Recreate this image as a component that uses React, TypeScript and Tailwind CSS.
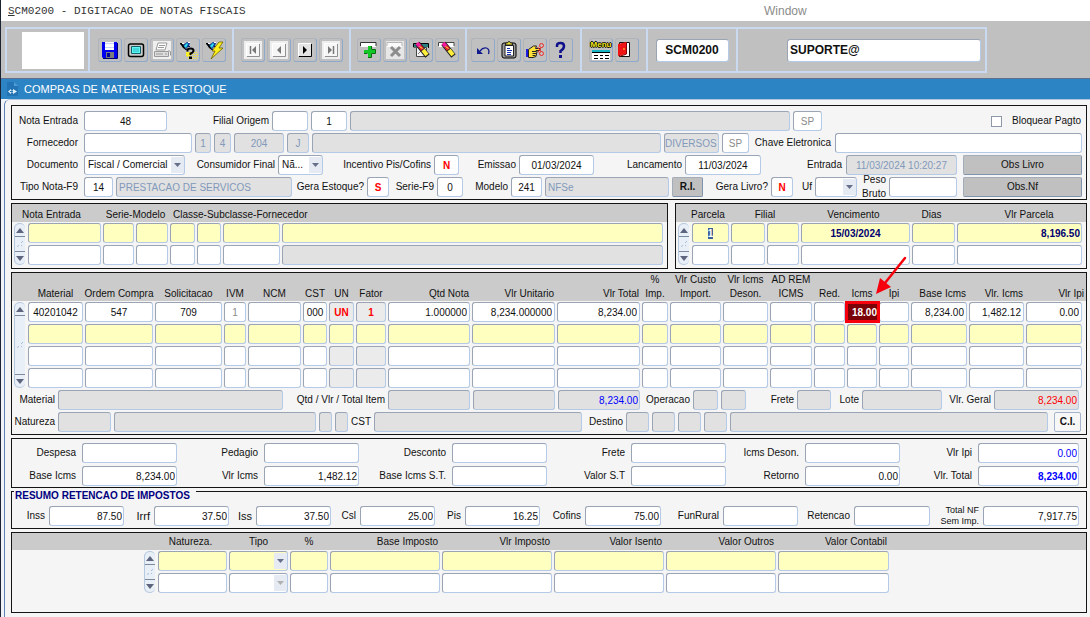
import React, { useEffect, useRef } from 'react'
import clsx from 'clsx'

type Tone = 'white' | 'gray' | 'light' | 'yellow'

const tones: Record<Tone, string> = {
  white: 'bg-white',
  gray: 'bg-[#e1e1e1]',
  light: 'bg-[#ebebeb]',
  yellow: 'bg-[#ffffc0]',
}

const frame =
  'h-5 min-w-0 rounded-[3px] border border-t-[#9aa4b4] border-l-[#9aa4b4] border-r-[#b4cae6] border-b-[#b4cae6] outline-none'

type FieldProps = {
  id?: string
  label?: string
  value?: string
  tone?: Tone
  className?: string
}

function Field({ id, label, value = '', tone = 'white', className }: FieldProps) {
  return (
    <input
      id={id}
      aria-label={label}
      type="text"
      defaultValue={value}
      readOnly={tone === 'gray'}
      className={clsx(frame, tones[tone], 'px-0.5', className)}
    />
  )
}

function Label({ htmlFor, className, children }: { htmlFor: string; className?: string; children: React.ReactNode }) {
  return (
    <label htmlFor={htmlFor} className={clsx('shrink-0 text-right whitespace-nowrap', className)}>
      {children}
    </label>
  )
}

type SelectProps = { id?: string; label?: string; value?: string; tone?: Tone; muted?: boolean; className?: string }

function Select({ id, label, value = '', tone = 'white', muted, className }: SelectProps) {
  return (
    <span className={clsx('relative block shrink-0', className)}>
      <select
        id={id}
        aria-label={label}
        defaultValue={value}
        className={clsx(frame, tones[tone], 'block w-full appearance-none border-r-[#9aa4b4] border-b-[#9aa4b4] pr-3 pl-[3px]')}
      >
        <option>{value}</option>
      </select>
      <span className="pointer-events-none absolute inset-y-0.5 right-px flex w-[13px] items-center justify-center bg-[#e6ebf3]">
        <svg width="7" height="4" viewBox="0 0 7 4">
          <path d="M0 0h7L3.5 4z" fill={muted ? '#b0b0b0' : '#66708a'} />
        </svg>
      </span>
    </span>
  )
}

function Scroller({ className }: { className: string }) {
  return (
    <div className={clsx('mx-auto flex w-[11px] flex-col rounded-full border-l border-[#b5c8e0] bg-[#e9eff7]', className)}>
      <button type="button" aria-label="Anterior" className="flex h-[14px] items-center justify-center rounded-t-full border-t border-[#b5c8e0] border-b border-b-[#7d899c]">
        <svg width="8" height="5" viewBox="0 0 8 5"><path d="M4 0l4 5H0z" fill="#5c657d" /></svg>
      </button>
      <span className="flex flex-1 items-center justify-center">
        <svg width="8" height="8" viewBox="0 0 8 8" stroke="#a9bdd8"><path d="M1 6.500l2-1M5 3l2-2M5 6l1-1" /></svg>
      </span>
      <button type="button" aria-label="Proximo" className="flex h-[14px] items-center justify-center rounded-b-full border-b border-[#b5c8e0] border-t border-t-[#7d899c]">
        <svg width="8" height="5" viewBox="0 0 8 5"><path d="M0 0h8L4 5z" fill="#5c657d" /></svg>
      </button>
    </div>
  )
}

/* ---------- toolbar drawings, all on a 24x24 box ---------- */

const Torch = () => (
  <>
    <path d="M4 5h2l2 2 1 3 2 1-1 1-3-2-2-3-1-1z" fill="#000" />
    <path d="M7 7l4-3 3 1-1 3-3 3z" fill="#123f9e" />
    <path d="M8 8l3-3 1 1-2 4z" fill="#2be0ea" />
    <path d="M12 4h2v1h-2zM6 5h2v1H6z" fill="#fff" />
    <path d="M12 8h2v1h-2zM9 11h2v1H9z" fill="#0a1c50" />
  </>
)

const Pencil = () => (
  <>
    <path d="M8.500 5.500l10 12.500" stroke="#222" strokeWidth="5.500" />
    <path d="M8 5l3 3.500" stroke="#f21c9a" strokeWidth="4" />
    <path d="M11 8.500l2.500 3" stroke="#e3202a" strokeWidth="4" />
    <path d="M10.500 8.500l3 2" stroke="#ffef3a" />
    <path d="M14 12l4 5" stroke="#ffef3a" strokeWidth="4" />
  </>
)

const Tile = ({ on }: { on?: boolean }) => (
  <>
    <path d="M3 3h18v18H3z" fill={on ? '#c4c4c4' : '#eeeeee'} />
    <path d="M6 6h12v12H6z" fill={on ? '#e4e4e4' : '#f6f6f6'} />
    <path d="M6 18.500h12.500V6" fill="none" stroke={on ? '#000' : '#909090'} />
    <path d="M5.500 18V5.500H18" fill="none" stroke="#fff" />
  </>
)

const icons: Record<string, React.ReactNode> = {
  Salvar: (
    <>
      <path d="M4 4h15v16H5l-1-1z" fill="#0000f0" />
      <path d="M7 4h9v8H7z" fill="#fff" />
      <path d="M7 5.500h9M7 9.500h9" stroke="#c9d2ff" />
      <path d="M8 14h8v6H8z" fill="#7c7c7c" />
      <path d="M9 15h3v4H9z" fill="#0000a0" />
      <path d="M19.500 5v15.500H5" fill="none" stroke="#000070" />
    </>
  ),
  Tela: (
    <>
      <rect x="4.500" y="6" width="15" height="12.500" rx="2" fill="#c9c9c9" stroke="#000" strokeWidth="1.500" />
      <path d="M7.500 8.500h9v7h-9z" fill="#5ff5f5" stroke="#14606a" />
      <path d="M9 11h6M9 13h6" stroke="#29b8bd" />
    </>
  ),
  Imprimir: (
    <>
      <path d="M3 3h18v18H3z" fill="#efefef" />
      <path d="M8 5h9l-2 7H6z" fill="#fff" stroke="#999" />
      <path d="M9 7.500h6M8 9.500h6" stroke="#999" />
      <path d="M4.500 13.500h14v5h-14z" fill="#ddd" stroke="#999" />
      <path d="M6 16h7M15 16h2M18.500 12.500l2 1v4" fill="none" stroke="#999" />
    </>
  ),
  Consultar: (
    <>
      <path d="M12 14.500h9M11 16.500h11M11 18.500h11M12 20.500h10" stroke="#f7ee28" strokeDasharray="1 1" />
      <path d="M10 14h4v4h-4z" fill="#f7ee28" />
      <Torch />
      <path d="M11.500 13.500V12q0-1.500 3-1.500t3 2-3 3V17" fill="none" stroke="#000" strokeWidth="2" />
      <path d="M13 18.500h3V21h-3z" fill="#000" />
    </>
  ),
  Executar: (
    <>
      <Torch />
      <path d="M17 4h4l-4 6h4L9 21l4-8h-3z" fill="#ffef1a" stroke="#6b6300" strokeWidth=".8" />
    </>
  ),
  Primeiro: (<><Tile /><path d="M9.500 8v8" stroke="#777" strokeWidth="1.500" /><path d="M15 8v8l-4-4z" fill="#777" /></>),
  Voltar: (<><Tile /><path d="M14 8v8l-4-4z" fill="#777" /></>),
  Avancar: (<><Tile on /><path d="M10 8v8l4-4z" fill="#000" /></>),
  Ultimo: (<><Tile /><path d="M9 8v8l4-4z" fill="#777" /><path d="M14.500 8v8" stroke="#777" strokeWidth="1.500" /></>),
  Inserir: (
    <>
      <path d="M4 5h15v4H4z" fill="#fff" />
      <path d="M3.500 8V4.500H19V8" fill="none" stroke="#333" />
      <path d="M11 8h3v4h4v3h-4v4h-3v-4H7v-3h4z" fill="#12c824" />
      <path d="M14.500 8v3.500H18.500v4h-4v4H11M7 15.500h3.500" fill="none" stroke="#076b10" />
    </>
  ),
  Remover: (
    <>
      <path d="M3 3h18v18H3z" fill="#e6e6e6" />
      <path d="M4 5h15v4H4z" fill="#fafafa" />
      <path d="M4 8V4.500h15V8" fill="none" stroke="#b5b5b5" />
      <path d="M8 9l9 9M17 9l-9 9" stroke="#8c8c8c" strokeWidth="3" />
    </>
  ),
  Pesquisar: (
    <>
      <path d="M4.500 9V5.500h15V10M4.500 9h3" fill="none" stroke="#000" />
      <path d="M5 6h14v3H5z" fill="#2c8080" />
      <path d="M7.500 9.500h10v9h-10z" fill="#f4f4f4" stroke="#444" />
      <path d="M9 16l4-4" stroke="#777" />
      <Pencil />
    </>
  ),
  Limpar: (
    <>
      <path d="M4 5h15v4H4z" fill="#fff" />
      <path d="M3.500 8V4.500H19V8" fill="none" stroke="#444" />
      <Pencil />
    </>
  ),
  Desfazer: (
    <>
      <path d="M9 13q3-4 6.500-3 3.500 1.500 2 6" fill="none" stroke="#101a8c" strokeWidth="1.300" />
      <path d="M6 10v6h6z" fill="#101a8c" />
    </>
  ),
  Colar: (
    <>
      <rect x="5" y="5" width="14" height="15" rx="2" fill="#9a9a9a" stroke="#000" />
      <path d="M8 7.500h8.500v10.500H8z" fill="#fff" stroke="#222" />
      <path d="M8.500 7h7V5h-2l-1-1.500h-1L10.500 5h-2z" fill="#f3e62a" stroke="#222" />
      <path d="M10 10.500h3M10 12.500h5M10 14.500h4M10 16.500h4" stroke="#1830a8" />
    </>
  ),
  Recortar: (
    <>
      <path d="M3 11h2v8H3z" fill="#1c1ce0" />
      <path d="M5.500 11.500l5-3.500h3l-1 2.500h4.500v2h-4l1 1-1 5-3 1h-4.500z" fill="#ffe23a" stroke="#222" />
      <path d="M9 13.500h4.500M9.500 15.500h4M9.500 17.500h3" stroke="#222" />
      <circle cx="18.500" cy="7.500" r="2" fill="none" stroke="#f02828" />
      <circle cx="18.500" cy="15.500" r="2" fill="none" stroke="#f02828" />
      <path d="M14.500 9l3.500 4.500M15 14.500l3-5" stroke="#f02828" />
    </>
  ),
  Ajuda: (
    <>
      <path d="M8 9V7.500Q8 5 11.500 5T15 8t-3.500 5v2" fill="none" stroke="#10108c" strokeWidth="2.500" />
      <path d="M10 17h3v3h-3z" fill="#10108c" />
    </>
  ),
  Sair: (
    <>
      <path d="M5 4h10v14H5z" fill="#e8e8e8" />
      <path d="M4.500 4.500h10v14h-10z" fill="none" stroke="#111" />
      <path d="M10 5h4v13h-4z" fill="#fff" />
      <path d="M3 6l8-2v12l-8 2z" fill="#f01414" />
      <path d="M11.500 4v12L4 18.500" fill="none" stroke="#8b0000" />
      <path d="M8 11h2" stroke="#ffe23a" />
    </>
  ),
}

function Tool({ name }: { name: string }) {
  return (
    <button
      type="button"
      title={name}
      aria-label={name}
      className="flex size-6 items-center justify-center rounded-[3px] border border-t-[#b0b4ba] border-l-[#b0b4ba] border-r-[#8ea9cb] border-b-[#8ea9cb]"
    >
      {name === 'Menu' ? (
        <span className="flex w-full flex-col items-center">
          <span className="text-[8px] leading-[10px] font-bold text-[#f5ea1e] [text-shadow:1px_0_#000,-1px_0_#000,0_1px_#000,0_-1px_#000]">Menu</span>
          <svg width="20" height="10" viewBox="0 0 20 10">
            <path d="M1 0h18v10H1z" fill="#fff" />
            <path d="M1 1h18" stroke="#1ab5c4" strokeWidth="2" />
            <path d="M1 2.500h18" stroke="#000" />
            <path d="M3 5.500h4M9 5.500h3M14 5.500h4M3 8.500h4M9 8.500h3M14 8.500h4" stroke="#000" />
          </svg>
        </span>
      ) : (
        <svg width="24" height="24" viewBox="0 0 24 24" className="shrink-0">{icons[name]}</svg>
      )}
    </button>
  )
}

function ToolGroup({ names, className }: { names: string[]; className: string }) {
  return (
    <div className={clsx('flex shrink-0 items-center gap-0.5 border-r-2 border-[#c9d9ef]', className)}>
      {names.map(n => <Tool key={n} name={n} />)}
    </div>
  )
}

function Toolbar() {
  return (
    <div className="h-[58px] border-b border-[#5f6f8c] bg-[#c0c0c0] px-1 pt-1.5">
      <div className="flex h-[46px] w-fit border-2 border-[#c9d9ef] text-xs font-bold">
        <div className="flex w-[83px] shrink-0 items-center justify-end border-r-2 border-[#c9d9ef] pr-1">
          <span className="h-[37px] w-[62px] bg-white" />
        </div>
        <ToolGroup className="w-[144px] pl-2" names={['Salvar', 'Tela', 'Imprimir', 'Consultar', 'Executar']} />
        <ToolGroup className="w-[117px] pl-[7px]" names={['Primeiro', 'Voltar', 'Avancar', 'Ultimo']} />
        <ToolGroup className="w-[116px] pl-[6px]" names={['Inserir', 'Remover', 'Pesquisar', 'Limpar']} />
        <ToolGroup className="w-[115px] pl-[4px]" names={['Desfazer', 'Colar', 'Recortar', 'Ajuda']} />
        <ToolGroup className="w-[66px] pl-[7px]" names={['Menu', 'Sair']} />
        <div className="flex w-[90px] shrink-0 items-center justify-center border-r-2 border-[#c9d9ef]">
          <input aria-label="Programa" defaultValue="SCM0200" className={clsx(frame, 'h-[23px] w-[73px] bg-white text-center')} />
        </div>
        <div className="flex w-[247px] shrink-0 items-center justify-end pr-1">
          <input aria-label="Usuario" defaultValue="SUPORTE@" className={clsx(frame, 'h-[23px] w-[194px] bg-white px-0.5')} />
        </div>
      </div>
    </div>
  )
}

const panel = 'border border-[#151515] bg-[#f5f5f5]'
const push = 'h-5 shrink-0 rounded-[2px] border border-[#a3adba] border-b-[#7f93ad] border-r-[#7f93ad] bg-[#c0c0c0] text-center'

function NotaPanel() {
  return (
    <section className={clsx(panel, 'flex flex-col gap-0.5 pt-[5px] pr-1 pb-0.5 pl-0.5')}>
      <div className="flex items-center gap-[3px]">
        <Label htmlFor="nota" className="w-[67px] pr-[3px]">Nota Entrada</Label>
        <Field id="nota" value="48" className="w-[83px] text-center" />
        <Label htmlFor="filial" className="w-[99px]">Filial Origem</Label>
        <Field id="filial" className="w-[36px]" />
        <Field label="Codigo filial" value="1" className="w-[36px] text-center" />
        <Field label="Nome filial" tone="gray" className="flex-1" />
        <Field label="UF filial" value="SP" className="w-[29px] text-center text-[#8a8a8a]" />
        <div className="flex w-[257px] items-center justify-end gap-[10px] pr-px">
          <input id="bloq" type="checkbox" className="size-[11px] appearance-none border border-[#8e98a8] bg-white" />
          <label htmlFor="bloq">Bloquear Pagto</label>
        </div>
      </div>
      <div className="flex items-center gap-[3px]">
        <Label htmlFor="forn" className="w-[67px] pr-[3px]">Fornecedor</Label>
        <Field id="forn" className="w-[108px]" />
        <Field label="Classe" tone="gray" value="1" className="w-[16px] text-center text-[#8199bb]" />
        <Field label="Subclasse" tone="gray" value="4" className="w-[17px] text-center text-[#8199bb]" />
        <Field label="Codigo" tone="gray" value="204" className="w-[50px] text-center text-[#8199bb]" />
        <Field label="Pessoa" tone="gray" value="J" className="w-[22px] text-center text-[#8199bb]" />
        <Field label="Nome fornecedor" tone="gray" className="flex-1" />
        <Field label="Cidade" tone="gray" value="DIVERSOS" className="w-[55px] !px-0 text-[#8199bb]" />
        <Field label="UF" value="SP" className="w-[27px] text-center text-[#8a8a8a]" />
        <Label htmlFor="chave" className="w-[80px] pr-px">Chave Eletronica</Label>
        <Field id="chave" className="w-[247px]" />
      </div>
      <div className="flex items-center gap-[3px]">
        <Label htmlFor="doc" className="w-[67px] pr-[3px]">Documento</Label>
        <Select id="doc" value="Fiscal / Comercial" className="w-[101px]" />
        <Label htmlFor="cons" className="w-[87px]">Consumidor Final</Label>
        <Select id="cons" value="Nã..." className="w-[45px]" />
        <Label htmlFor="inc" className="w-[105px]">Incentivo Pis/Cofins</Label>
        <Field id="inc" value="N" className="w-[25px] text-center font-bold text-[#f00]" />
        <Label htmlFor="emi" className="w-[54px]">Emissao</Label>
        <Field id="emi" value="01/03/2024" className="w-[75px] text-center" />
        <Label htmlFor="lan" className="w-[85px]">Lancamento</Label>
        <Field id="lan" value="11/03/2024" className="w-[76px] text-center" />
        <Label htmlFor="ent" className="flex-1 pr-px">Entrada</Label>
        <Field id="ent" tone="gray" value="11/03/2024 10:20:27" className="w-[111px] text-center text-[#8199bb]" />
        <button type="button" className={clsx(push, 'ml-[3px] w-[119px]')}>Obs Livro</button>
      </div>
      <div className="flex items-center gap-[3px]">
        <Label htmlFor="tipo" className="w-[67px] pr-[3px]">Tipo Nota-F9</Label>
        <Field id="tipo" value="14" className="w-[29px] text-center" />
        <Field label="Descricao tipo" tone="gray" value="PRESTACAO DE SERVICOS" className="w-[176px] text-[#8199bb]" />
        <Label htmlFor="gest" className="w-[69px]">Gera Estoque?</Label>
        <Field id="gest" value="S" className="w-[22px] text-center font-bold text-[#f00]" />
        <Label htmlFor="serie" className="w-[42px]">Serie-F9</Label>
        <Field id="serie" value="0" className="w-[26px] text-center" />
        <Label htmlFor="mod" className="w-[42px]">Modelo</Label>
        <Field id="mod" value="241" className="w-[31px] text-center" />
        <Field label="Descricao modelo" tone="gray" value="NFSe" className="flex-1 text-[#8199bb]" />
        <button type="button" className={clsx(push, 'w-[31px] font-bold')}>R.I.</button>
        <Label htmlFor="gliv" className="w-[62px]">Gera Livro?</Label>
        <Field id="gliv" value="N" className="w-[22px] text-center font-bold text-[#f00]" />
        <Label htmlFor="uf" className="w-[16px]">Uf</Label>
        <Select id="uf" className="w-[42px]" />
        <Label htmlFor="peso" className="-my-1 w-[26px] leading-[14px]">Peso<br />Bruto</Label>
        <Field id="peso" className="w-[68px]" />
        <button type="button" className={clsx(push, 'ml-[3px] w-[119px]')}>Obs.Nf</button>
      </div>
    </section>
  )
}

const grid = 'w-full table-fixed border-collapse [&_td]:px-px [&_td]:py-px [&_td:last-child]:pr-1 [&_th]:p-0 [&_th]:font-normal [&_th]:whitespace-nowrap'
const headRow = 'h-[18px] [&_th]:!pt-[3px]'

function ReferenciaPanel() {
  return (
    <section className={clsx(panel, 'min-w-0 flex-1 pb-0.5')}>
      <table className={grid}>
        <colgroup>
          <col className="w-[15px]" /><col className="w-[75px]" /><col className="w-[33px]" /><col className="w-[34px]" />
          <col className="w-[27px]" /><col className="w-[26px]" /><col className="w-[59px]" /><col />
        </colgroup>
        <thead className="bg-[#cbcbcb]">
          <tr className={headRow}>
            <th colSpan={2} className="!pl-[10px] text-left">Nota Entrada</th>
            <th colSpan={2} className="text-center">Serie-Modelo</th>
            <th colSpan={4} className="!pl-1 text-left">Classe-Subclasse-Fornecedor</th>
          </tr>
        </thead>
        <tbody>
          {[0, 1].map(r => (
            <tr key={r}>
              {r === 0 && <td rowSpan={2}><Scroller className="h-[42px]" /></td>}
              {['Nota', 'Serie', 'Modelo', 'Classe', 'Subclasse', 'Codigo', 'Fornecedor'].map((n, i) => (
                <td key={n}>
                  <Field label={`${n} ${r + 1}`} tone={r === 0 ? 'yellow' : i === 6 ? 'gray' : 'white'} className="block w-full" />
                </td>
              ))}
            </tr>
          ))}
        </tbody>
      </table>
    </section>
  )
}

function ParcelaPanel() {
  const first = useRef<HTMLInputElement | null>(null)

  // parcela 1 opens focused with its text selected
  useEffect(() => {
    first.current?.focus({ preventScroll: true })
    first.current?.select()
  }, [])

  return (
    <section className={clsx(panel, 'w-[412px] shrink-0 pb-0.5')}>
      <table className={grid}>
        <colgroup>
          <col className="w-[15px]" /><col className="w-[39px]" /><col className="w-[36px]" /><col className="w-[34px]" />
          <col className="w-[111px]" /><col className="w-[45px]" /><col />
        </colgroup>
        <thead className="bg-[#cbcbcb]">
          <tr className={headRow}>
            <th /><th className="!pr-1.5 text-center">Parcela</th><th colSpan={2} className="text-center">Filial</th>
            <th className="!pr-1 text-center">Vencimento</th><th className="!pr-1 text-center">Dias</th><th className="!pl-4 text-center">Vlr Parcela</th>
          </tr>
        </thead>
        <tbody>
          <tr>
            <td rowSpan={2}><Scroller className="h-[42px]" /></td>
            <td>
              <input
                ref={first}
                aria-label="Parcela 1"
                defaultValue="1"
                className={clsx(frame, 'block w-full bg-[#ffffc0] text-center font-bold selection:bg-[#3c5f99] selection:text-white')}
              />
            </td>
            <td><Field label="Filial 1" tone="yellow" className="block w-full" /></td>
            <td><Field label="Filial 1 codigo" tone="yellow" className="block w-full" /></td>
            <td><Field label="Vencimento 1" tone="yellow" value="15/03/2024" className="block w-full text-center font-bold text-[#000070]" /></td>
            <td><Field label="Dias 1" tone="yellow" className="block w-full" /></td>
            <td><Field label="Vlr Parcela 1" tone="yellow" value="8,196.50" className="block w-full !pr-px text-right font-bold text-[#000070]" /></td>
          </tr>
          <tr>
            {['Parcela', 'Filial', 'Filial codigo', 'Vencimento', 'Dias', 'Vlr Parcela'].map(n => (
              <td key={n}><Field label={`${n} 2`} className="block w-full" /></td>
            ))}
          </tr>
        </tbody>
      </table>
    </section>
  )
}

type Column = { name: string; width: string; head?: string; cell?: string; value?: string; tone?: Tone }

const itemColumns: Column[] = [
  { name: 'Material', width: 'w-[57px]', value: '40201042', cell: 'text-center' },
  { name: 'Ordem Compra', width: 'w-[70px]', value: '547', cell: 'text-center' },
  { name: 'Solicitacao', width: 'w-[69px]', value: '709', cell: 'text-center' },
  { name: 'IVM', width: 'w-[24px]', value: '1', cell: 'text-center text-[#8a8a8a]' },
  { name: 'NCM', width: 'w-[55px]' },
  { name: 'CST', width: 'w-[26px]', value: '000', cell: 'text-center' },
  { name: 'UN', width: 'w-[27px]', value: 'UN', cell: 'text-center font-bold text-[#f00]', tone: 'light' },
  { name: 'Fator', width: 'w-[32px]', value: '1', cell: 'text-center font-bold text-[#f00]', tone: 'light' },
  { name: 'Qtd Nota', width: 'w-[84px]', head: 'text-right', value: '1.000000', cell: 'text-right' },
  { name: 'Vlr Unitario', width: 'w-[85px]', head: 'text-right', value: '8,234.000000', cell: 'text-right' },
  { name: 'Vlr Total', width: 'w-[85px]', head: 'text-right', value: '8,234.00', cell: 'text-right' },
  { name: '%\nImp.', width: 'w-[28px]' },
  { name: 'Vlr Custo\nImport.', width: 'w-[53px]' },
  { name: 'Vlr Icms\nDeson.', width: 'w-[47px]' },
  { name: 'AD REM\nICMS', width: 'w-[44px]' },
  { name: 'Red.', width: 'w-[33px]' },
  { name: 'Icms', width: 'w-[32px]', value: '18.00' },
  { name: 'Ipi', width: 'w-[32px]' },
  { name: 'Base Icms', width: 'w-[58px]', head: 'text-right', value: '8,234.00', cell: 'text-right' },
  { name: 'Vlr. Icms', width: 'w-[57px]', head: 'text-right', value: '1,482.12', cell: 'text-right' },
  { name: 'Vlr Ipi', width: 'w-[61px]', head: 'text-right', value: '0.00', cell: 'text-right' },
]

/* Highlighted rate: red frame around the field and an arrow pointing at it */
function IcmsCell() {
  return (
    <div className="relative h-5">
      <input
        aria-label="Icms 1"
        defaultValue="18.00"
        className="absolute -inset-x-0.5 -top-px h-[22px] w-[35px] border-3 border-[#f5000c] bg-[#7a0006] text-right font-bold text-white outline-none"
      />
      <svg className="pointer-events-none absolute -top-[46px] left-[28px]" width="34" height="40" viewBox="0 0 34 40">
        <path d="M30 2L10 27" stroke="#f5000c" strokeWidth="2.500" strokeLinecap="round" />
        <path d="M1 38L5 22l11 9z" fill="#f5000c" />
      </svg>
    </div>
  )
}

function ItensPanel() {
  return (
    <section className={clsx(panel, 'pb-0.5')}>
      <table className={grid}>
        <colgroup>
          <col className="w-[15px]" />
          {itemColumns.map(c => <col key={c.name} className={c.width} />)}
        </colgroup>
        <thead className="bg-[#cbcbcb]">
          <tr className="h-[28px]">
            <th />
            {itemColumns.map(c => (
              <th key={c.name} className={clsx('align-bottom leading-[14px] !whitespace-pre', c.head ? [c.head, '!pr-0.5'] : 'text-center')}>
                {c.name}
              </th>
            ))}
          </tr>
        </thead>
        <tbody>
          {[0, 1, 2, 3].map(r => (
            <tr key={r}>
              {r === 0 && <td rowSpan={4}><Scroller className="h-[86px]" /></td>}
              {itemColumns.map(c => (
                <td key={c.name}>
                  {r === 0 && c.name === 'Icms' ? (
                    <IcmsCell />
                  ) : (
                    <Field
                      label={`${c.name} ${r + 1}`}
                      tone={r === 1 ? 'yellow' : c.tone}
                      value={r === 0 ? c.value : ''}
                      className={clsx('block w-full', c.cell)}
                    />
                  )}
                </td>
              ))}
            </tr>
          ))}
        </tbody>
      </table>

      <div className="flex items-center gap-[3px] pt-px pr-[7px] pl-0.5">
        <Label htmlFor="mat" className="w-[41px]">Material</Label>
        <Field id="mat" tone="gray" className="flex-1" />
        <Label htmlFor="qtd" className="w-[99px]">Qtd / Vlr / Total Item</Label>
        <Field id="qtd" tone="gray" className="w-[82px]" />
        <Field label="Valor item" tone="gray" className="w-[82px]" />
        <Field label="Total item" tone="gray" value="8,234.00" className="w-[82px] !pr-px text-right text-[#00f]" />
        <Label htmlFor="oper" className="w-[47px]">Operacao</Label>
        <Field id="oper" tone="gray" className="w-[25px]" />
        <Field label="Operacao 2" tone="gray" className="w-[25px]" />
        <Label htmlFor="ifrete" className="w-[45px]">Frete</Label>
        <Field id="ifrete" tone="gray" className="w-[34px]" />
        <Label htmlFor="lote" className="w-[25px]">Lote</Label>
        <Field id="lote" tone="gray" className="w-[80px]" />
        <Label htmlFor="geral" className="w-[46px]">Vlr. Geral</Label>
        <Field id="geral" tone="gray" value="8,234.00" className="w-[85px] !pr-px text-right text-[#f00]" />
      </div>
      <div className="flex items-center gap-[3px] pt-0.5 pr-[5px] pl-0.5">
        <Label htmlFor="nat" className="w-[41px]">Natureza</Label>
        <Field id="nat" tone="gray" className="w-[53px]" />
        <Field label="Natureza descricao" tone="gray" className="w-[202px]" />
        <Field label="Natureza a" tone="gray" className="w-[13px]" />
        <Field label="Natureza b" tone="gray" className="w-[13px]" />
        <Label htmlFor="cst" className="w-[20px]">CST</Label>
        <Field id="cst" tone="gray" className="flex-1" />
        <Label htmlFor="dest" className="w-[38px]">Destino</Label>
        <Field id="dest" tone="gray" className="w-[23px]" />
        <Field label="Destino 2" tone="gray" className="w-[23px]" />
        <Field label="Destino 3" tone="gray" className="w-[23px]" />
        <Field label="Destino 4" tone="gray" className="w-[23px]" />
        <Field label="Destino descricao" tone="gray" className="w-[318px]" />
        <button type="button" className="ml-[3px] h-5 w-[27px] rounded-[2px] border border-[#a3b4cc] bg-[#f7f7f7] font-bold">C.I.</button>
      </div>
    </section>
  )
}

const totals: [string, string, string?][] = [
  ['Despesa', ''], ['Pedagio', ''], ['Desconto', ''], ['Frete', ''], ['Icms Deson.', ''], ['Vlr Ipi', '0.00', 'text-[#00f]'],
  ['Base Icms', '8,234.00'], ['Vlr Icms', '1,482.12'], ['Base Icms S.T.', ''], ['Valor S.T', ''], ['Retorno', '0.00'],
  ['Vlr. Total', '8,234.00', 'font-bold text-[#00f]'],
]

function TotaisPanel() {
  return (
    <section
      className={clsx(
        panel,
        'grid grid-cols-[64fr_95fr_79fr_95fr_85fr_95fr_76fr_95fr_71fr_95fr_70fr_101fr] items-center gap-x-1 gap-y-[3px] pt-1 pr-[7px] pb-px pl-0.5',
      )}
    >
      {totals.map(([name, value, extra]) => (
        <React.Fragment key={name}>
          <Label htmlFor={`tot-${name}`} className="pr-0.5">{name}</Label>
          <Field id={`tot-${name}`} value={value} className={clsx('!pr-px text-right', extra)} />
        </React.Fragment>
      ))}
    </section>
  )
}

const taxes: [string, string][] = [
  ['Inss', '87.50'], ['Irrf', '37.50'], ['Iss', '37.50'], ['Csl', '25.00'], ['Pis', '16.25'], ['Cofins', '75.00'],
  ['FunRural', ''], ['Retencao', ''],
]

function ResumoPanel() {
  return (
    <section className={clsx(panel, 'px-0.5 pb-0.5')}>
      <h2 className="relative -mt-[3px] mb-[3px] w-fit bg-[#f5f5f5] pr-1.5 pl-px leading-[13px] font-bold text-[#000080]">RESUMO RETENCAO DE IMPOSTOS</h2>
      <div className="grid grid-cols-[31fr_75fr_22fr_75fr_19fr_75fr_21fr_75fr_22fr_75fr_37fr_76fr_54fr_75fr_48fr_76fr_45fr_96fr] items-center gap-x-1 pt-px pr-[5px]">
        {taxes.map(([name, value]) => (
          <React.Fragment key={name}>
            <Label htmlFor={`tax-${name}`} className={name === 'Irrf' || name === 'Iss' ? 'text-[11px]' : ''}>{name}</Label>
            <Field id={`tax-${name}`} value={value} className="!pr-px text-right" />
          </React.Fragment>
        ))}
        <Label htmlFor="tax-total" className="-my-1 text-[9px] leading-[11px]">Total NF<br />Sem Imp.</Label>
        <Field id="tax-total" value="7,917.75" className="!pr-px text-right" />
      </div>
    </section>
  )
}

function NaturezaPanel() {
  const money = ['Base Imposto', 'Vlr Imposto', 'Valor Isento', 'Valor Outros', 'Valor Contabil']
  return (
    <section className={clsx(panel, 'pb-[18px]')}>
      <table className={grid}>
        <colgroup>
          <col className="w-[130px]" /><col className="w-[15px]" /><col className="w-[71px]" /><col className="w-[61px]" />
          <col className="w-[40px]" /><col className="w-[112px]" /><col className="w-[112px]" /><col className="w-[112px]" />
          <col className="w-[112px]" /><col className="w-[113px]" /><col />
        </colgroup>
        <thead className="bg-[#cbcbcb]">
          <tr className="h-[17px] [&_th]:!pt-px">
            <th colSpan={2} />
            <th className="!pr-1 text-center">Natureza.</th>
            <th className="text-center">Tipo</th>
            <th className="text-center">%</th>
            {money.map(m => <th key={m} className="!pr-[3px] text-right">{m}</th>)}
            <th />
          </tr>
        </thead>
        <tbody>
          {[0, 1].map(r => {
            const tone: Tone = r === 0 ? 'yellow' : 'white'
            return (
              <tr key={r}>
                {r === 0 && <td rowSpan={2} />}
                {r === 0 && <td rowSpan={2}><Scroller className="h-[42px]" /></td>}
                <td><Field label={`Natureza ${r + 1}`} tone={tone} className="block w-full" /></td>
                <td><Select label={`Tipo ${r + 1}`} tone={tone} muted={r === 1} /></td>
                <td><Field label={`Percentual ${r + 1}`} tone={tone} className="block w-full" /></td>
                {money.map(m => (
                  <td key={m}><Field label={`${m} ${r + 1}`} tone={tone} className="block w-full text-right" /></td>
                ))}
                <td />
              </tr>
            )
          })}
        </tbody>
      </table>
    </section>
  )
}

export default function App() {
  return (
    <div className="min-h-screen border-l border-[#1c2433] bg-[#f0f4f9] font-['Liberation_Sans',Arial,sans-serif] text-[10px] leading-3 text-[#111]">
      <header className="flex h-[21px] items-center bg-white pl-[7px] text-[#333]">
        <h1 className="w-[756px] shrink-0 font-['Liberation_Mono',monospace] text-[11px]"><u>S</u>CM0200 - DIGITACAO DE NOTAS FISCAIS</h1>
        <span className="text-xs text-[#8b8b8b]">Window</span>
      </header>
      <Toolbar />
      <div className="flex h-5 items-center gap-1.5 bg-[#2c84c4] pl-1.5 text-[11px] text-white">
        <svg width="11" height="14" viewBox="0 0 11 14">
          <path d="M0 0h7l4 4v10H0z" fill="#2374b4" />
          <path d="M7 0v4h4" fill="#4f9ed6" />
          <path d="M1 9.500l3-2.500v1.500h2V7l4 2.500L6 12v-1.500H4V12z" fill="#e4f2fc" />
          <path d="M3 9.500h3" stroke="#2374b4" />
        </svg>
        <h2>COMPRAS DE MATERIAIS E ESTOQUE</h2>
      </div>
      <main className="ml-[3px] flex flex-col gap-[3px] rounded-tl-md border-t border-l border-t-[#b3c5dc] border-l-[#5f83b5] bg-[#f5f5f5] pt-[5px] pr-[3px] pb-1 pl-1.5">
        <NotaPanel />
        <div className="flex gap-[7px]">
          <ReferenciaPanel />
          <ParcelaPanel />
        </div>
        <ItensPanel />
        <TotaisPanel />
        <ResumoPanel />
        <NaturezaPanel />
      </main>
    </div>
  )
}
